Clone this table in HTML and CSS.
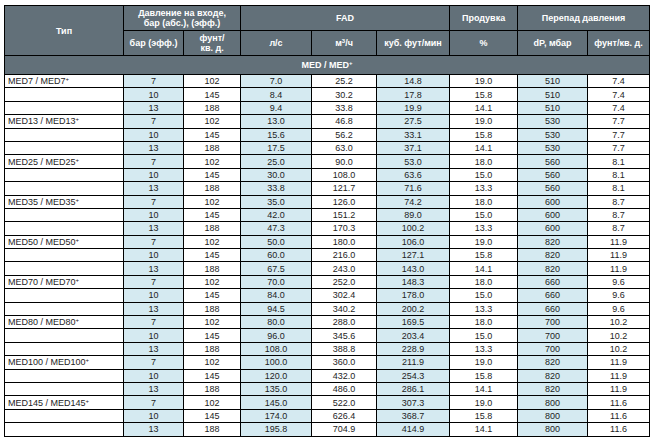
FILE: index.html
```html
<!DOCTYPE html>
<html lang="ru">
<head>
<meta charset="utf-8">
<title>MED</title>
<link rel="stylesheet" href="styles.css">
</head>
<body>
<table class="spec">
  <colgroup>
    <col class="c1"><col class="c2"><col class="c3"><col class="c4"><col class="c5"><col class="c6"><col class="c7"><col class="c8"><col class="c9">
  </colgroup>
  <thead>
    <tr class="h1">
      <th rowspan="2">Тип</th>
      <th colspan="2">Давление на входе,<br>бар (абс.), (эфф.)</th>
      <th colspan="3">FAD</th>
      <th>Продувка</th>
      <th colspan="2">Перепад давления</th>
    </tr>
    <tr class="h2">
      <th>бар (эфф.)</th>
      <th>фунт/<br>кв. д.</th>
      <th>л/с</th>
      <th>м<sup>3</sup>/ч</th>
      <th>куб. фут/мин</th>
      <th>%</th>
      <th>dP, мбар</th>
      <th>фунт/кв. д.</th>
    </tr>
    <tr class="grp">
      <th colspan="9">MED / MED<sup>+</sup></th>
    </tr>
  </thead>
  <tbody>
    <tr><td class="t">MED7 / MED7<sup>+</sup></td><td class="b">7</td><td>102</td><td class="b">7.0</td><td>25.2</td><td class="b">14.8</td><td>19.0</td><td class="b">510</td><td>7.4</td></tr>
    <tr><td class="t"></td><td class="b">10</td><td>145</td><td class="b">8.4</td><td>30.2</td><td class="b">17.8</td><td>15.8</td><td class="b">510</td><td>7.4</td></tr>
    <tr><td class="t"></td><td class="b">13</td><td>188</td><td class="b">9.4</td><td>33.8</td><td class="b">19.9</td><td>14.1</td><td class="b">510</td><td>7.4</td></tr>
    <tr><td class="t">MED13 / MED13<sup>+</sup></td><td class="b">7</td><td>102</td><td class="b">13.0</td><td>46.8</td><td class="b">27.5</td><td>19.0</td><td class="b">530</td><td>7.7</td></tr>
    <tr><td class="t"></td><td class="b">10</td><td>145</td><td class="b">15.6</td><td>56.2</td><td class="b">33.1</td><td>15.8</td><td class="b">530</td><td>7.7</td></tr>
    <tr><td class="t"></td><td class="b">13</td><td>188</td><td class="b">17.5</td><td>63.0</td><td class="b">37.1</td><td>14.1</td><td class="b">530</td><td>7.7</td></tr>
    <tr><td class="t">MED25 / MED25<sup>+</sup></td><td class="b">7</td><td>102</td><td class="b">25.0</td><td>90.0</td><td class="b">53.0</td><td>18.0</td><td class="b">560</td><td>8.1</td></tr>
    <tr><td class="t"></td><td class="b">10</td><td>145</td><td class="b">30.0</td><td>108.0</td><td class="b">63.6</td><td>15.0</td><td class="b">560</td><td>8.1</td></tr>
    <tr><td class="t"></td><td class="b">13</td><td>188</td><td class="b">33.8</td><td>121.7</td><td class="b">71.6</td><td>13.3</td><td class="b">560</td><td>8.1</td></tr>
    <tr><td class="t">MED35 / MED35<sup>+</sup></td><td class="b">7</td><td>102</td><td class="b">35.0</td><td>126.0</td><td class="b">74.2</td><td>18.0</td><td class="b">600</td><td>8.7</td></tr>
    <tr><td class="t"></td><td class="b">10</td><td>145</td><td class="b">42.0</td><td>151.2</td><td class="b">89.0</td><td>15.0</td><td class="b">600</td><td>8.7</td></tr>
    <tr><td class="t"></td><td class="b">13</td><td>188</td><td class="b">47.3</td><td>170.3</td><td class="b">100.2</td><td>13.3</td><td class="b">600</td><td>8.7</td></tr>
    <tr><td class="t">MED50 / MED50<sup>+</sup></td><td class="b">7</td><td>102</td><td class="b">50.0</td><td>180.0</td><td class="b">106.0</td><td>19.0</td><td class="b">820</td><td>11.9</td></tr>
    <tr><td class="t"></td><td class="b">10</td><td>145</td><td class="b">60.0</td><td>216.0</td><td class="b">127.1</td><td>15.8</td><td class="b">820</td><td>11.9</td></tr>
    <tr><td class="t"></td><td class="b">13</td><td>188</td><td class="b">67.5</td><td>243.0</td><td class="b">143.0</td><td>14.1</td><td class="b">820</td><td>11.9</td></tr>
    <tr><td class="t">MED70 / MED70<sup>+</sup></td><td class="b">7</td><td>102</td><td class="b">70.0</td><td>252.0</td><td class="b">148.3</td><td>18.0</td><td class="b">660</td><td>9.6</td></tr>
    <tr><td class="t"></td><td class="b">10</td><td>145</td><td class="b">84.0</td><td>302.4</td><td class="b">178.0</td><td>15.0</td><td class="b">660</td><td>9.6</td></tr>
    <tr><td class="t"></td><td class="b">13</td><td>188</td><td class="b">94.5</td><td>340.2</td><td class="b">200.2</td><td>13.3</td><td class="b">660</td><td>9.6</td></tr>
    <tr><td class="t">MED80 / MED80<sup>+</sup></td><td class="b">7</td><td>102</td><td class="b">80.0</td><td>288.0</td><td class="b">169.5</td><td>18.0</td><td class="b">700</td><td>10.2</td></tr>
    <tr><td class="t"></td><td class="b">10</td><td>145</td><td class="b">96.0</td><td>345.6</td><td class="b">203.4</td><td>15.0</td><td class="b">700</td><td>10.2</td></tr>
    <tr><td class="t"></td><td class="b">13</td><td>188</td><td class="b">108.0</td><td>388.8</td><td class="b">228.9</td><td>13.3</td><td class="b">700</td><td>10.2</td></tr>
    <tr><td class="t">MED100 / MED100<sup>+</sup></td><td class="b">7</td><td>102</td><td class="b">100.0</td><td>360.0</td><td class="b">211.9</td><td>19.0</td><td class="b">820</td><td>11.9</td></tr>
    <tr><td class="t"></td><td class="b">10</td><td>145</td><td class="b">120.0</td><td>432.0</td><td class="b">254.3</td><td>15.8</td><td class="b">820</td><td>11.9</td></tr>
    <tr><td class="t"></td><td class="b">13</td><td>188</td><td class="b">135.0</td><td>486.0</td><td class="b">286.1</td><td>14.1</td><td class="b">820</td><td>11.9</td></tr>
    <tr><td class="t">MED145 / MED145<sup>+</sup></td><td class="b">7</td><td>102</td><td class="b">145.0</td><td>522.0</td><td class="b">307.3</td><td>19.0</td><td class="b">800</td><td>11.6</td></tr>
    <tr><td class="t"></td><td class="b">10</td><td>145</td><td class="b">174.0</td><td>626.4</td><td class="b">368.7</td><td>15.8</td><td class="b">800</td><td>11.6</td></tr>
    <tr><td class="t"></td><td class="b">13</td><td>188</td><td class="b">195.8</td><td>704.9</td><td class="b">414.9</td><td>14.1</td><td class="b">800</td><td>11.6</td></tr>
  </tbody>
</table>
</body>
</html>
```

FILE: styles.css
```css
html, body {
  margin: 0;
  padding: 0;
  background: #ffffff;
}

body {
  padding: 5px 0 0 4px;
  font-family: "Liberation Sans", Arial, sans-serif;
}

.spec {
  border-collapse: collapse;
  table-layout: fixed;
  width: 645px;
  font-size: 9px;
  color: #1d1d24;
}

.c1 { width: 119px; }
.c2 { width: 60px; }
.c3 { width: 57px; }
.c4 { width: 71px; }
.c5 { width: 65px; }
.c6 { width: 73px; }
.c7 { width: 68px; }
.c8 { width: 70px; }
.c9 { width: 62px; }

.spec th,
.spec td {
  border: 1px solid #000;
  padding: 0;
  text-align: center;
  vertical-align: middle;
  line-height: 10px;
  white-space: nowrap;
}

.spec thead th {
  background: #627079;
  color: #ffffff;
  font-weight: bold;
}

.h1 th,
.h2 th {
  height: 24px;
}

.grp th {
  background: #3b3e41;
  height: 18px;
}

.spec sup {
  font-size: 6px;
  line-height: 0;
  vertical-align: 3px;
}

.spec tbody tr {
  height: 13.4px;
}

.spec td.t {
  text-align: left;
  padding-left: 3px;
}

.spec td.b {
  background: #d5eaf1;
}
```
